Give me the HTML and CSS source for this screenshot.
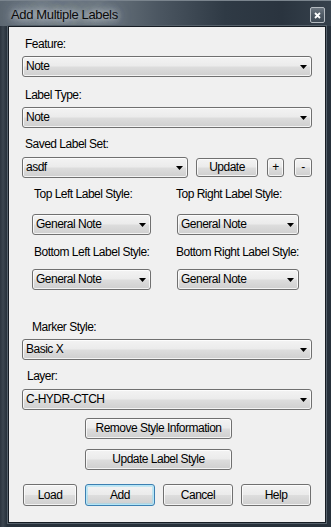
FILE: index.html
```html
<!DOCTYPE html>
<html>
<head>
<meta charset="utf-8">
<link rel="stylesheet" href="styles.css">
</head>
<body>
<div class="window">
  <div class="titlebar">
    <span class="title">Add Multiple Labels</span>
    <div class="close"><svg width="7" height="7" viewBox="0 0 7 7"><path d="M1 1L6 6M6 1L1 6" stroke="#fff" stroke-width="1.8"/></svg></div>
  </div>
  <div class="client">
    <div class="label l-feature">Feature:</div>
    <div class="combo c-feature"><span class="val">Note</span><svg class="arrow" width="7" height="4" viewBox="0 0 7 4"><path d="M0 0H7L3.5 4Z"/></svg></div>

    <div class="label l-type">Label Type:</div>
    <div class="combo c-type"><span class="val">Note</span><svg class="arrow" width="7" height="4" viewBox="0 0 7 4"><path d="M0 0H7L3.5 4Z"/></svg></div>

    <div class="label l-saved">Saved Label Set:</div>
    <div class="saved-row">
      <div class="combo c-saved"><span class="val">asdf</span><svg class="arrow" width="7" height="4" viewBox="0 0 7 4"><path d="M0 0H7L3.5 4Z"/></svg></div>
      <div class="btn b-update">Update</div>
      <div class="btn b-plus">+</div>
      <div class="btn b-minus">-</div>
    </div>

    <div class="styles-grid">
      <div class="label g-tl">Top Left Label Style:</div>
      <div class="label g-tr">Top Right Label Style:</div>
      <div class="combo c-left c-top"><span class="val">General Note</span><svg class="arrow" width="7" height="4" viewBox="0 0 7 4"><path d="M0 0H7L3.5 4Z"/></svg></div>
      <div class="combo c-right c-top"><span class="val">General Note</span><svg class="arrow" width="7" height="4" viewBox="0 0 7 4"><path d="M0 0H7L3.5 4Z"/></svg></div>
      <div class="label g-bl">Bottom Left Label Style:</div>
      <div class="label g-br">Bottom Right Label Style:</div>
      <div class="combo c-left c-bottom"><span class="val">General Note</span><svg class="arrow" width="7" height="4" viewBox="0 0 7 4"><path d="M0 0H7L3.5 4Z"/></svg></div>
      <div class="combo c-right c-bottom"><span class="val">General Note</span><svg class="arrow" width="7" height="4" viewBox="0 0 7 4"><path d="M0 0H7L3.5 4Z"/></svg></div>
    </div>

    <div class="label l-marker">Marker Style:</div>
    <div class="combo c-marker"><span class="val">Basic X</span><svg class="arrow" width="7" height="4" viewBox="0 0 7 4"><path d="M0 0H7L3.5 4Z"/></svg></div>

    <div class="label l-layer">Layer:</div>
    <div class="combo c-layer"><span class="val">C-HYDR-CTCH</span><svg class="arrow" width="7" height="4" viewBox="0 0 7 4"><path d="M0 0H7L3.5 4Z"/></svg></div>

    <div class="btn b-remove">Remove Style Information</div>
    <div class="btn b-updstyle">Update Label Style</div>

    <div class="bottom-row">
      <div class="btn b-load">Load</div>
      <div class="btn b-add">Add</div>
      <div class="btn b-cancel">Cancel</div>
      <div class="btn b-help">Help</div>
    </div>
  </div>
</div>
</body>
</html>
```

FILE: styles.css
```css
* { box-sizing: border-box; }
html, body { margin: 0; padding: 0; }
body {
  background: #1d252e;
  font-family: "Liberation Sans", Arial, sans-serif;
}
.window {
  width: 331px;
  height: 527px;
  display: flex;
  flex-direction: column;
  padding: 0 5px 4px 8px;
  background:
    linear-gradient(180deg, rgba(255,255,255,0.12) 0, rgba(255,255,255,0) 1px),
    linear-gradient(90deg, #2a333d 0, #3c4650 3px, #26303a 7px, #26303a 100%);
}
.titlebar {
  height: 26px;
  flex: none;
  display: flex;
  align-items: flex-start;
  margin-left: -8px;
  margin-right: -5px;
  padding-left: 11px;
  padding-right: 6px;
  background: linear-gradient(90deg, #5c6771 0%, #6f7a84 12%, #6b767f 30%, #4b5661 48%, #2f3a45 68%, #2a343f 85%, #36414c 100%);
  border-top: 1px solid #7a848d;
}
.title {
  font-size: 13px;
  letter-spacing: -0.35px;
  line-height: 16px;
  margin-top: 6px;
  color: #0a0a0a;
  text-shadow: 0 0 6px rgba(235,240,245,0.9), 0 0 12px rgba(235,240,245,0.6), 0 0 18px rgba(235,240,245,0.35);
}
.close {
  margin-left: auto;
  margin-top: 6px;
  width: 15px;
  height: 16px;
  border: 1px solid #b4bac0;
  border-radius: 2px;
  background: linear-gradient(180deg, #6d7781 0%, #4f5a65 50%, #3f4a55 100%);
  display: flex;
  align-items: center;
  justify-content: center;
}
.client {
  flex: 1;
  border: 1px solid #161c23;
  box-shadow: 0 0 0 1px #56616b;
  background: #f0f0f0;
  display: flex;
  flex-direction: column;
  align-items: flex-start;
  padding: 10px 13px 0 13px;
  color: #000;
  font-size: 12px;
  letter-spacing: -0.5px;
}
.label {
  height: 14px;
  line-height: 14px;
  white-space: nowrap;
}
.combo, .btn {
  border: 1px solid #707070;
  border-radius: 3px;
  background: linear-gradient(180deg, #f3f3f3 0%, #ebebeb 48%, #dddddd 52%, #cfcfcf 100%);
  box-shadow: inset 0 0 0 1px rgba(255,255,255,0.75);
  white-space: nowrap;
}
.combo {
  height: 21px;
  display: flex;
  align-items: center;
  padding: 0 4px 0 3px;
}
.combo .val { flex: 1; line-height: 19px; }
.combo .arrow { flex: none; fill: #000; }
.btn {
  height: 21px;
  line-height: 19px;
  text-align: center;
}

.l-feature { margin-left: 3px; }
.c-feature { width: 100%; margin-top: 5px; }
.l-type { margin-left: 3px; margin-top: 11px; }
.c-type { width: 100%; margin-top: 5px; }
.l-saved { margin-left: 3px; margin-top: 9px; }
.saved-row {
  margin-top: 6px;
  width: 100%;
  display: flex;
  align-items: center;
}
.c-saved { width: 166px; }
.b-update { width: 62px; height: 19px; line-height: 17px; margin-left: 8px; }
.b-plus { width: 17px; height: 19px; line-height: 17px; margin-left: 9px; }
.b-minus { width: 18px; height: 19px; line-height: 17px; margin-left: 10px; }

.styles-grid {
  margin-top: 9px;
  margin-left: 10px;
  display: grid;
  grid-template-columns: 145px 122px;
  grid-auto-rows: auto;
  align-items: start;
}
.g-tl, .g-bl { margin-left: 2px; }
.g-tr, .g-br { margin-left: -1px; }
.c-top { margin-top: 13px; }
.g-bl, .g-br { margin-top: 10px; }
.c-bottom { margin-top: 10px; }
.c-left { width: 119px; }
.c-right { width: 122px; }

.l-marker { margin-left: 10px; margin-top: 30px; }
.c-marker { width: 100%; margin-top: 5px; }
.l-layer { margin-left: 5px; margin-top: 9px; }
.c-layer { width: 100%; margin-top: 6px; }

.b-remove { width: 147px; margin-left: 63px; margin-top: 8px; }
.b-updstyle { width: 147px; margin-left: 63px; margin-top: 10px; }

.bottom-row {
  margin-top: 14px;
  margin-left: 1px;
  display: flex;
  gap: 8px;
}
.bottom-row .btn { height: 22px; line-height: 20px; width: 70px; }
.bottom-row .b-load { width: 54px; }
.b-add {
  border-color: #3c7fb1;
  box-shadow: inset 0 0 0 1px #b5e6f7, inset 0 0 0 2px rgba(150,215,240,0.5);
}
```
